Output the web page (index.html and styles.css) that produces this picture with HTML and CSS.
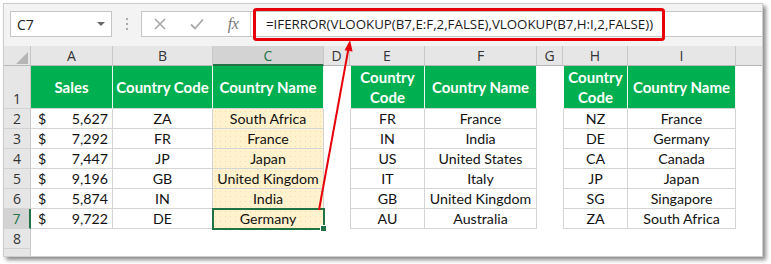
FILE: index.html
```html
<!DOCTYPE html>
<html>
<head>
<meta charset="utf-8">
<link rel="stylesheet" href="styles.css">
</head>
<body>
<div class="window">
  <div class="toolbar">
    <div class="namebox"><span>C7</span><span class="caret"></span></div>
    <div class="grip"><i></i><i></i><i></i></div>
    <div class="fbar">
      <div class="fbtns">
        <span class="fbtn"><svg width="12" height="12" viewBox="0 0 12 12"><path d="M1 1L11 11M11 1L1 11" stroke="#a8a8a8" stroke-width="1.6" fill="none"/></svg></span>
        <span class="fbtn"><svg width="14" height="12" viewBox="0 0 14 12"><path d="M1 6.5L5 10.5L13 1.5" stroke="#a8a8a8" stroke-width="1.8" fill="none"/></svg></span>
        <span class="fbtn fx">fx</span>
      </div>
      <div class="formula">=IFERROR(VLOOKUP(B7,E:F,2,FALSE),VLOOKUP(B7,H:I,2,FALSE))</div>
    </div>
  </div>
  <div class="sheet">
    <div class="corner"><svg width="12" height="12" viewBox="0 0 12 12"><polygon points="12,0 12,12 0,12" fill="#b5b5b5"/></svg></div>
    <div class="ch">A</div><div class="ch">B</div><div class="ch sel">C</div><div class="ch">D</div><div class="ch">E</div><div class="ch">F</div><div class="ch">G</div><div class="ch">H</div><div class="ch">I</div><div class="ch last"></div>

    <div class="rh">1</div>
    <div class="hd">Sales</div><div class="hd">Country Code</div><div class="hd">Country Name</div><div class="e"></div>
    <div class="hd l">Country<br>Code</div><div class="hd">Country Name</div><div class="e"></div>
    <div class="hd l">Country<br>Code</div><div class="hd">Country Name</div><div class="e"></div>

    <div class="rh">2</div>
    <div class="td money"><span>$</span><span>5,627</span></div><div class="td">ZA</div><div class="td yl">South Africa</div><div class="e"></div>
    <div class="td l">FR</div><div class="td">France</div><div class="e"></div>
    <div class="td l">NZ</div><div class="td">France</div><div class="e"></div>

    <div class="rh">3</div>
    <div class="td money"><span>$</span><span>7,292</span></div><div class="td">FR</div><div class="td yl">France</div><div class="e"></div>
    <div class="td l">IN</div><div class="td">India</div><div class="e"></div>
    <div class="td l">DE</div><div class="td">Germany</div><div class="e"></div>

    <div class="rh">4</div>
    <div class="td money"><span>$</span><span>7,447</span></div><div class="td">JP</div><div class="td yl">Japan</div><div class="e"></div>
    <div class="td l">US</div><div class="td">United States</div><div class="e"></div>
    <div class="td l">CA</div><div class="td">Canada</div><div class="e"></div>

    <div class="rh">5</div>
    <div class="td money"><span>$</span><span>9,196</span></div><div class="td">GB</div><div class="td yl">United Kingdom</div><div class="e"></div>
    <div class="td l">IT</div><div class="td">Italy</div><div class="e"></div>
    <div class="td l">JP</div><div class="td">Japan</div><div class="e"></div>

    <div class="rh">6</div>
    <div class="td money"><span>$</span><span>5,874</span></div><div class="td">IN</div><div class="td yl">India</div><div class="e"></div>
    <div class="td l">GB</div><div class="td">United Kingdom</div><div class="e"></div>
    <div class="td l">SG</div><div class="td">Singapore</div><div class="e"></div>

    <div class="rh sel">7</div>
    <div class="td money"><span>$</span><span>9,722</span></div><div class="td">DE</div><div class="td yl cur">Germany</div><div class="e"></div>
    <div class="td l">AU</div><div class="td">Australia</div><div class="e"></div>
    <div class="td l">ZA</div><div class="td">South Africa</div><div class="e"></div>

    <div class="rh">8</div>
    <div class="e"></div><div class="e"></div><div class="e"></div><div class="e"></div><div class="e"></div><div class="e"></div><div class="e"></div><div class="e"></div><div class="e"></div><div class="e"></div>

    <div class="rh end"></div>
    <div class="e"></div><div class="e"></div><div class="e"></div><div class="e"></div><div class="e"></div><div class="e"></div><div class="e"></div><div class="e"></div><div class="e"></div><div class="e"></div>
  </div>
</div>
<svg class="annot" width="771" height="264" viewBox="0 0 771 264">
  <rect x="254.5" y="9.5" width="409" height="30" rx="2" fill="none" stroke="#e5000a" stroke-width="3"/>
  <line x1="319" y1="210" x2="348.4" y2="49" stroke="#e5000a" stroke-width="2"/>
  <polygon points="350,40 352.6,51.6 344.6,50.2" fill="#e5000a"/>
</svg>
</body>
</html>
```

FILE: styles.css
```css
* { box-sizing: border-box; margin: 0; padding: 0; }
body {
  background: #fff;
  padding: 3px;
  width: 771px;
  height: 264px;
  position: relative;
  overflow: hidden;
}
.window {
  width: 760px;
  height: 254px;
  border: 1px solid #cdcdcd;
  background: #fff;
  box-shadow: 3px 3px 4px rgba(0, 0, 0, 0.45);
  display: flex;
  flex-direction: column;
}
.toolbar {
  height: 42px;
  flex: none;
  background: #f3f3f3;
  display: flex;
  align-items: flex-start;
  padding: 7px 0 0 6px;
}
.namebox {
  width: 102px;
  height: 26px;
  background: #fff;
  border: 1px solid #c6c6c6;
  display: flex;
  align-items: center;
  justify-content: space-between;
  padding: 0 6px 0 6px;
  font: 14px "Open Sans", sans-serif;
  color: #222;
}
.caret {
  width: 0;
  height: 0;
  border-left: 4px solid transparent;
  border-right: 4px solid transparent;
  border-top: 4px solid #666;
}
.grip {
  margin-left: 14px;
  margin-top: 7px;
  display: flex;
  flex-direction: column;
  gap: 3px;
}
.grip i {
  display: block;
  width: 2px;
  height: 2px;
  background: #a9a9a9;
}
.fbar {
  margin-left: 13px;
  flex: 1;
  height: 26px;
  background: #fff;
  border: 1px solid #c6c6c6;
  border-right: none;
  display: flex;
  align-items: center;
}
.fbtns {
  display: grid;
  grid-template-columns: 36px 38px 34px;
  width: 109px;
  height: 100%;
  border-right: 1px solid #d6d6d6;
  align-items: center;
  justify-items: center;
}
.fbtn { display: flex; align-items: center; }
.fx {
  font: italic 16px "Liberation Serif", serif;
  color: #777;
  letter-spacing: -0.5px;
}
.formula {
  padding-left: 15px;
  font: 13.3px "Open Sans", sans-serif;
  color: #1a1a1a;
  white-space: nowrap;
}
.sheet {
  flex: 1;
  display: grid;
  grid-template-columns: 27px 82px 100px 111px 26px 75px 112px 26px 65px 108px 1fr;
  grid-template-rows: 20px 43px repeat(7, 20px) 7px;
}
.corner {
  background: #e6e6e6;
  border-right: 1px solid #c8c8c8;
  border-bottom: 1px solid #b8b8b8;
  display: flex;
  justify-content: flex-end;
  align-items: flex-end;
  padding: 0 2px 1px 0;
}
.ch {
  background: #e6e6e6;
  border-right: 1px solid #c8c8c8;
  border-bottom: 1px solid #b8b8b8;
  font: 14px "Open Sans", sans-serif;
  color: #333;
  display: flex;
  align-items: center;
  justify-content: center;
}
.ch.last { border-right: none; }
.ch.sel {
  background: #d3d3d3;
  color: #217346;
  border-bottom: 2px solid #217346;
}
.rh {
  background: #e6e6e6;
  border-right: 1px solid #c8c8c8;
  border-bottom: 1px solid #d2d2d2;
  font: 14px "Open Sans", sans-serif;
  color: #333;
  display: flex;
  align-items: flex-end;
  justify-content: center;
  line-height: 18px;
}
.rh.sel {
  background: #d3d3d3;
  color: #217346;
  border-right: 2px solid #217346;
}
.rh.end { border-bottom: none; }
.e { background: #fff; }
.hd {
  background: #00b050;
  color: #fff;
  font: bold 15px "Lato", sans-serif;
  border-right: 1px solid #eef7f1;
  border-bottom: 1px solid #d4d4d4;
  display: flex;
  align-items: center;
  justify-content: center;
  text-align: center;
  line-height: 20px;
}
.hd.l { border-left: 1px solid #fff; }
.td {
  border-right: 1px solid #d4d4d4;
  border-bottom: 1px solid #d4d4d4;
  font: 14.2px "Lato", sans-serif;
  color: #111;
  display: flex;
  align-items: center;
  justify-content: center;
  white-space: nowrap;
}
.td.l { border-left: 1px solid #d4d4d4; }
.money {
  justify-content: space-between;
  padding: 0 4px 0 7px;
}
.yl {
  background-color: #fff2cc;
  background-image: radial-gradient(circle, #f3ddb0 0.7px, transparent 1px);
  background-size: 5px 5px;
}
.cur {
  position: relative;
  outline: 2px solid #217346;
  outline-offset: -1px;
  z-index: 1;
}
.cur::after {
  content: "";
  position: absolute;
  right: -4px;
  bottom: -4px;
  width: 5px;
  height: 5px;
  background: #217346;
  border: 1px solid #fff;
  box-sizing: content-box;
}
.annot {
  position: absolute;
  top: 0;
  left: 0;
  pointer-events: none;
  z-index: 5;
}
```
